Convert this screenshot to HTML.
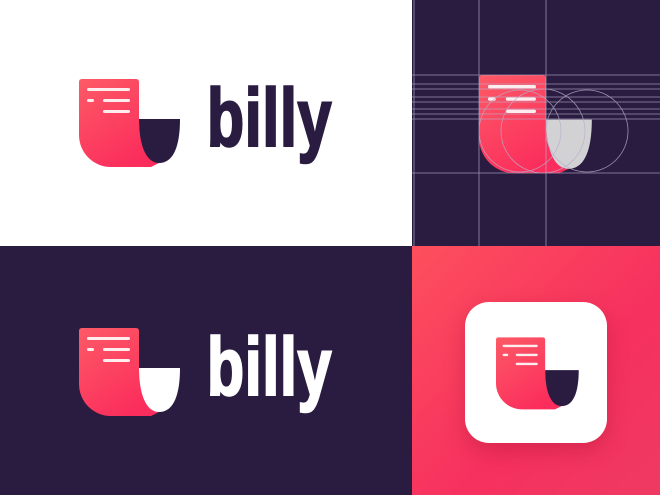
<!DOCTYPE html>
<html><head><meta charset="utf-8"><style>
html,body{margin:0;padding:0;width:660px;height:495px;overflow:hidden;font-family:"Liberation Sans",sans-serif}
.q{position:absolute}
.t{position:absolute;font-weight:bold;font-size:82px;line-height:1;transform:scaleX(.74);transform-origin:0 0;letter-spacing:1px;-webkit-text-stroke:2.5px currentColor}
</style></head><body>
<svg width="0" height="0" style="position:absolute">
<defs>
<linearGradient id="pg" x1="0" y1="0" x2="0.6" y2="1"><stop offset="0" stop-color="#fd5a66"/><stop offset="1" stop-color="#fb2d5c"/></linearGradient>
<g id="doc">
<path d="M3,0H57Q60,0 60,3V40C60,66 69,84 80,84L72,88H32A32,32 0 0 1 0,56V3Q0,0 3,0Z" fill="url(#pg)"/>
<g fill="#fff" opacity=".9"><rect x="8" y="9" width="43" height="3" rx="1.5"/><rect x="8" y="20" width="7" height="3" rx="1.5"/><rect x="24" y="20" width="27" height="3" rx="1.5"/><rect x="24" y="31" width="27" height="3" rx="1.5"/></g>
</g>
<path id="bowl" d="M60,40H101C101,66 95,84 80,84C67,84 60,66 60,40Z"/>
</defs></svg>

<div class="q" style="left:0;top:0;width:412px;height:246px;background:#fff"></div>
<div class="q" style="left:412px;top:0;width:248px;height:246px;background:#291c40"></div>
<div class="q" style="left:0;top:246px;width:412px;height:249px;background:#291c40"></div>
<div class="q" style="left:412px;top:246px;width:248px;height:249px;background:linear-gradient(135deg,#fd4f5d,#f6305f 60%,#ee3a63)"></div>

<svg class="q" style="left:79px;top:79px" width="105" height="92" viewBox="0 0 105 92"><use href="#doc"/><use href="#bowl" fill="#291c40"/></svg>
<div class="t" style="left:207px;top:78px;color:#291c40">billy</div>

<svg class="q" style="left:79px;top:328px" width="105" height="92" viewBox="0 0 105 92"><use href="#doc"/><use href="#bowl" fill="#fff"/></svg>
<div class="t" style="left:207px;top:327px;color:#fff">billy</div>

<svg class="q" style="left:412px;top:0" width="248" height="246" viewBox="412 0 248 246">
<g transform="translate(479,75) scale(1.117)"><use href="#doc"/><use href="#bowl" fill="#d2d2d4"/></g>
<g stroke="#b9aecb" stroke-width="0.8" fill="none" opacity=".8">
<line x1="479" y1="0" x2="479" y2="246"/><line x1="546" y1="0" x2="546" y2="246"/><line x1="414" y1="0" x2="414" y2="246"/>
<line x1="412" y1="75" x2="660" y2="75"/><line x1="412" y1="84" x2="660" y2="84"/><line x1="412" y1="89" x2="660" y2="89"/>
<line x1="412" y1="97" x2="660" y2="97"/><line x1="412" y1="102" x2="660" y2="102"/><line x1="412" y1="109" x2="660" y2="109"/>
<line x1="412" y1="114" x2="660" y2="114"/><line x1="412" y1="119" x2="660" y2="119"/><line x1="412" y1="173" x2="660" y2="173"/>
<circle cx="520" cy="131" r="41"/><circle cx="543" cy="131" r="42"/><circle cx="587" cy="131" r="41"/>
</g></svg>

<div class="q" style="left:465px;top:302px;width:142px;height:141px;border-radius:24px;background:#fff;box-shadow:0 8px 20px rgba(160,20,50,.35)"></div>
<svg class="q" style="left:496px;top:337px" width="86" height="76" viewBox="0 0 105 92"><use href="#doc"/><use href="#bowl" fill="#291c40"/></svg>
</body></html>
